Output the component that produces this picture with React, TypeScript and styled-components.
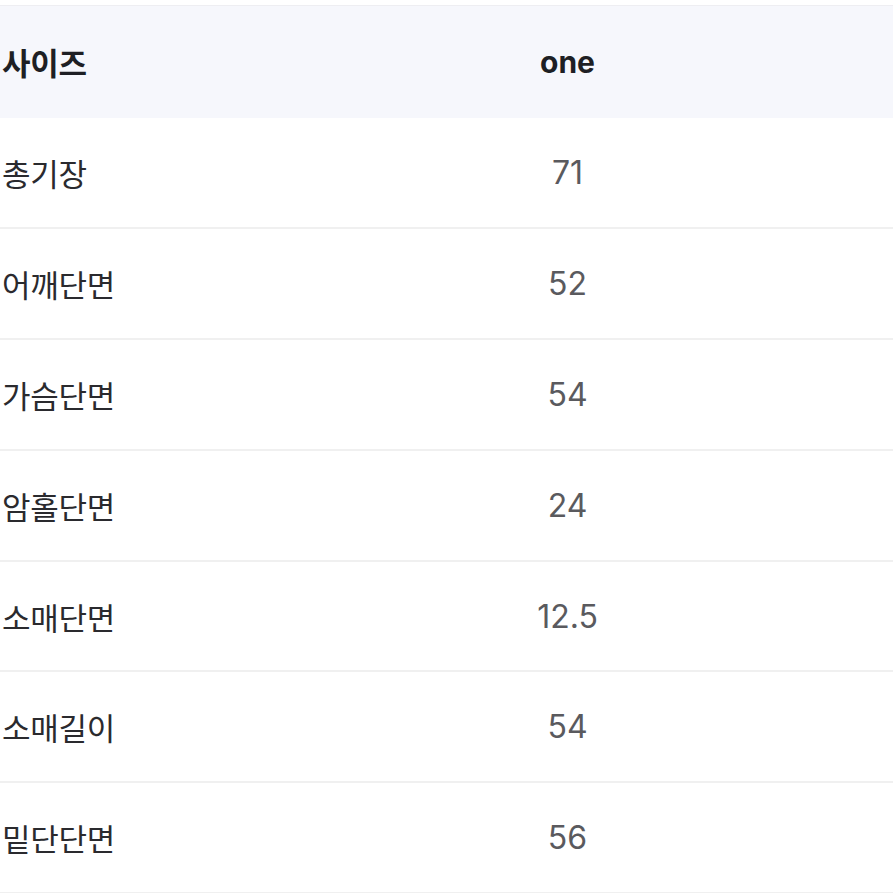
import React from "react";
import styled, { createGlobalStyle } from "styled-components";

const Global = createGlobalStyle`
  html, body { margin: 0; padding: 0; background: #ffffff; }
  body { font-family: "Inter", "Noto Sans CJK KR", sans-serif; }
`;

const Page = styled.div`
  width: 893px;
  height: 893px;
  overflow: hidden;
  padding-top: 5px;
  box-sizing: border-box;
  background: #fff;
`;

const Table = styled.table`
  width: 893px;
  border-collapse: collapse;
  table-layout: fixed;
  border-top: 1px solid #eeeef2;
`;

const HeadRow = styled.tr`
  background: #f6f7fc;
  height: 112px;
`;

const Row = styled.tr`
  height: 110.8px;
  border-bottom: 2px solid #f0f0f0;
`;

const LabelCell = styled.td<{ $head?: boolean }>`
  width: 240px;
  padding: 0 0 0 2px;
  font-family: "Noto Sans CJK KR", "Inter", sans-serif;
  font-size: 31px;
  font-weight: ${(p) => (p.$head ? 700 : 400)};
  color: ${(p) => (p.$head ? "#1e1f24" : "#2a2a2e")};
  letter-spacing: -0.3px;
  vertical-align: middle;
  text-align: left;
`;

const ValueCell = styled.td<{ $head?: boolean }>`
  text-align: center;
  font-family: "Inter", "Noto Sans CJK KR", sans-serif;
  font-size: ${(p) => (p.$head ? "30px" : "32px")};
  font-weight: ${(p) => (p.$head ? 700 : 400)};
  color: ${(p) => (p.$head ? "#1e1f24" : "#5a5a5e")};
  vertical-align: middle;
`;

const rows: [string, string][] = [
  ["총기장", "71"],
  ["어깨단면", "52"],
  ["가슴단면", "54"],
  ["암홀단면", "24"],
  ["소매단면", "12.5"],
  ["소매길이", "54"],
  ["밑단단면", "56"],
];

export default function App() {
  return (
    <>
      <Global />
      <Page>
        <Table>
          <thead>
            <HeadRow>
              <LabelCell as="th" $head>사이즈</LabelCell>
              <ValueCell as="th" $head>one</ValueCell>
            </HeadRow>
          </thead>
          <tbody>
            {rows.map(([k, v]) => (
              <Row key={k}>
                <LabelCell>{k}</LabelCell>
                <ValueCell>{v}</ValueCell>
              </Row>
            ))}
          </tbody>
        </Table>
      </Page>
    </>
  );
}
